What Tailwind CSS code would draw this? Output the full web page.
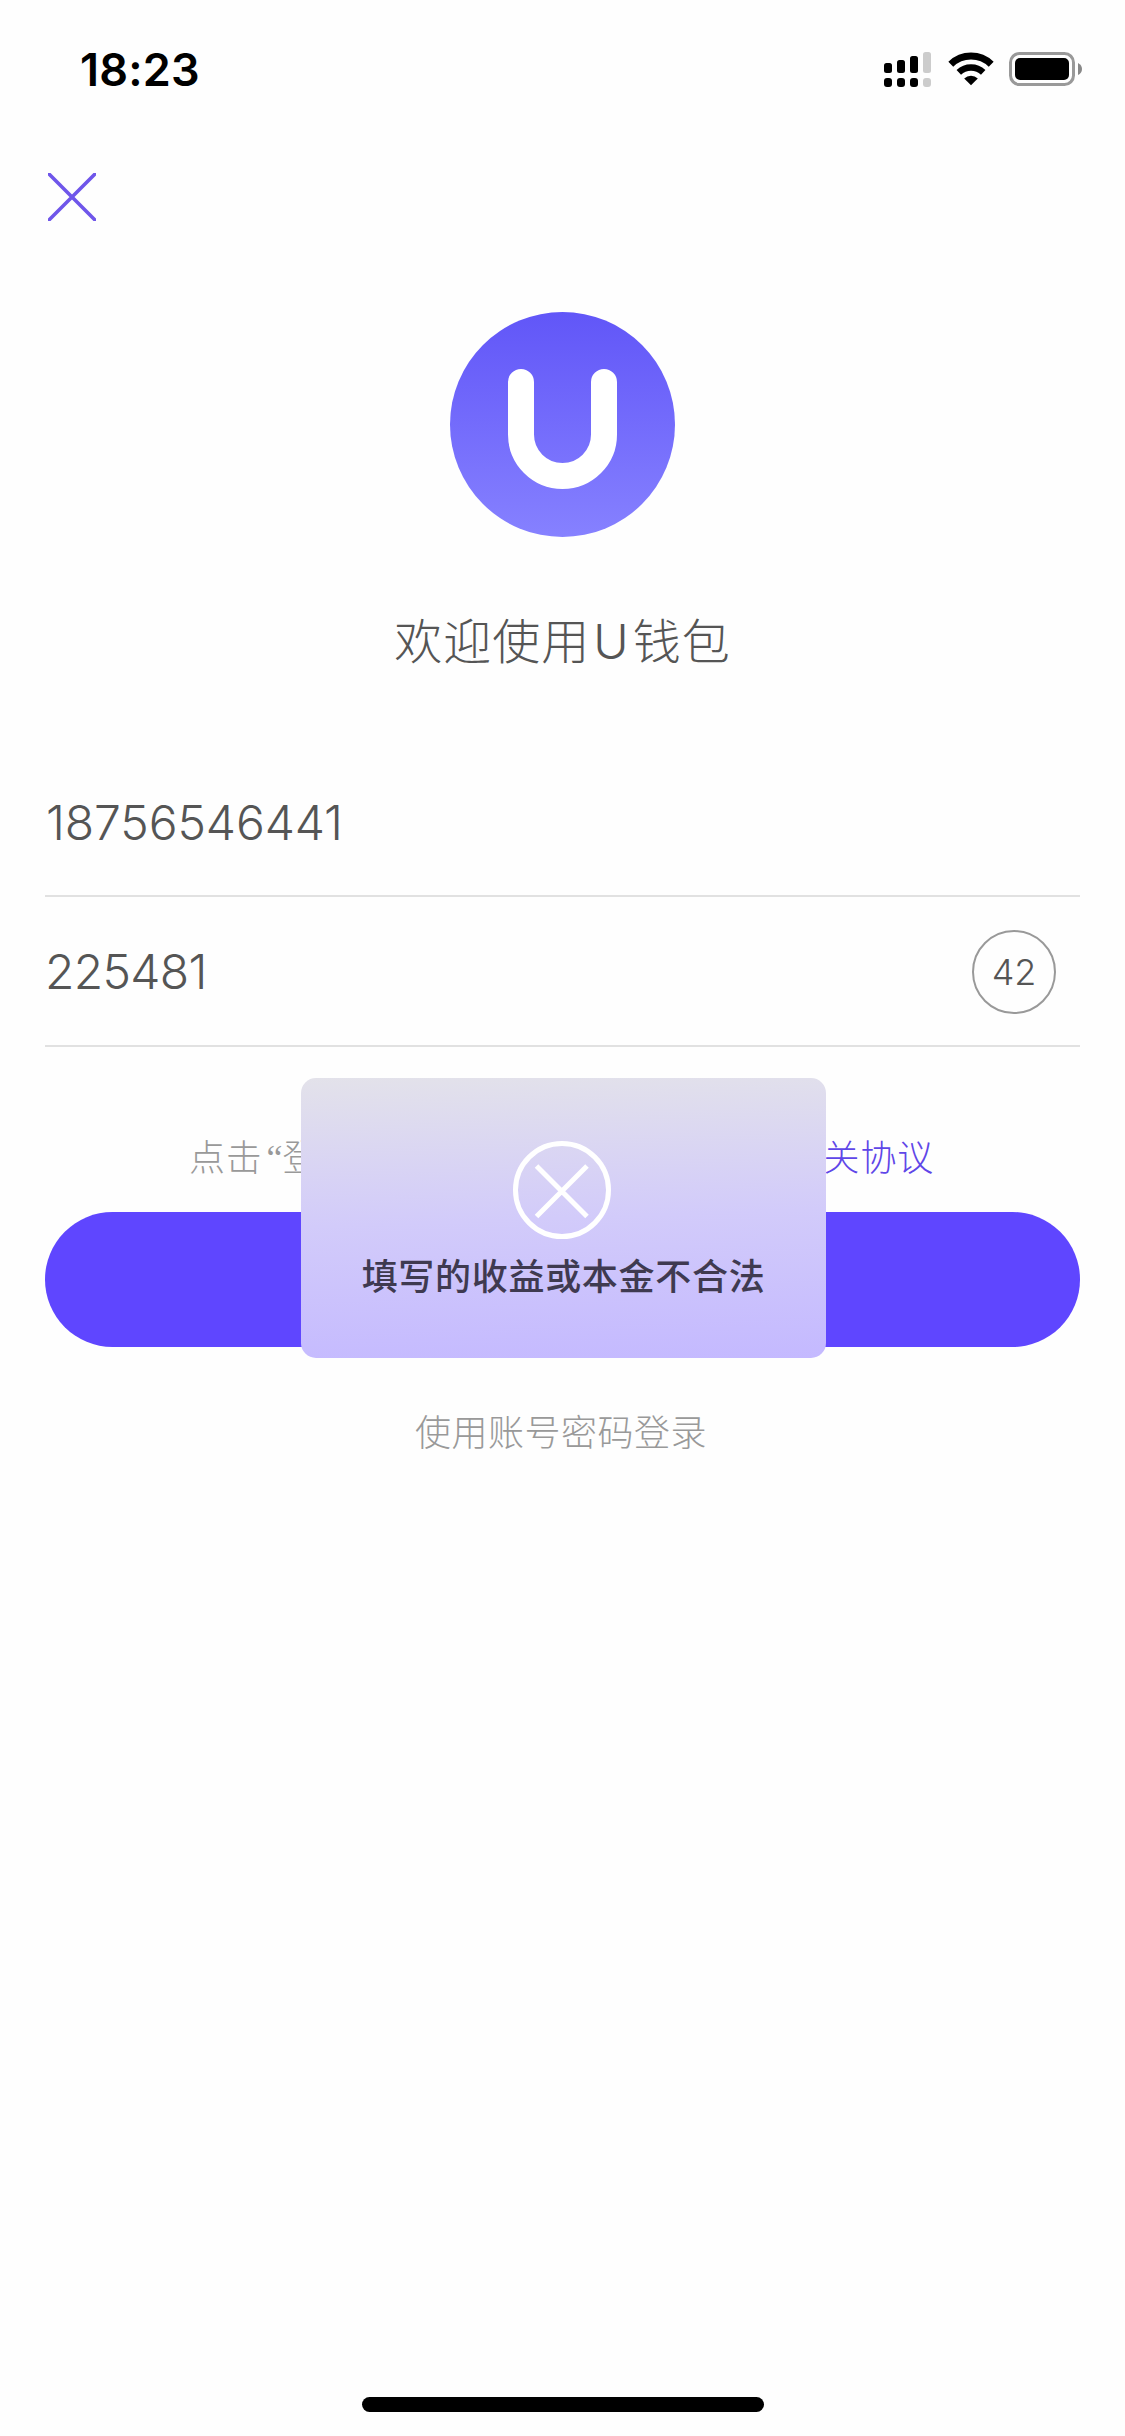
<!DOCTYPE html>
<html lang="zh-CN">
<head>
<meta charset="utf-8">
<meta name="viewport" content="width=device-width, initial-scale=1">
<title>U钱包</title>
<script src="https://cdn.jsdelivr.net/npm/@tailwindcss/browser@4"></script>
</head>
<body class="bg-white">
<div class="relative flex h-[2436px] w-[1125px] flex-col overflow-hidden bg-[#fefefe] font-['Inter','Noto_Sans_CJK_SC',sans-serif] font-light text-[#555]">
  <!-- Status bar -->
  <header class="flex h-[132px] items-center justify-between pt-1.5 pr-[42px] pl-[80px]">
    <time class="text-[45px] leading-none font-semibold tracking-[0.2px] text-black">18:23</time>
    <div class="flex h-9 items-start pt-px">
      <svg class="h-9 w-[48px]" viewBox="0 0 48 36">
        <g fill="#000">
          <rect x="0" y="11" width="8" height="10" rx="2.5"/><rect x="13" y="8" width="8" height="13" rx="2.5"/><rect x="26" y="4" width="8" height="17" rx="2.5"/>
          <rect x="0" y="26" width="8" height="9" rx="3"/><rect x="13" y="26" width="8" height="9" rx="3"/><rect x="26" y="26" width="8" height="9" rx="3"/>
        </g>
        <g fill="#ccc"><rect x="39" y="0" width="8" height="21" rx="2.5"/><rect x="39" y="26" width="8" height="9" rx="3"/></g>
      </svg>
      <svg class="ml-4 h-9 w-[46px]" viewBox="0 0 46 36">
        <path d="M2.8 12.2A29 29 0 0 1 43.2 12.2" fill="none" stroke="#000" stroke-width="7"/>
        <path d="M10.8 20.4A17.5 17.5 0 0 1 35.2 20.4" fill="none" stroke="#000" stroke-width="6.4"/>
        <path d="M23 33.2L16.2 26.4A10 10 0 0 1 29.8 26.4Z" fill="#000"/>
      </svg>
      <svg class="ml-[15px] h-9 w-[74px]" viewBox="0 0 74 36">
        <rect x="1.5" y="1.5" width="63" height="31" rx="9" fill="none" stroke="#999" stroke-width="3"/>
        <rect x="6" y="6" width="54" height="22" rx="5"/>
        <path d="M69 11Q73 13 73 17T69 23Z" fill="#888"/>
      </svg>
    </div>
  </header>

  <main class="flex flex-col px-[45px] pt-[41px]">
    <button class="ml-[3px] size-12" aria-label="关闭">
      <svg class="size-12" viewBox="0 0 48 48"><path d="M0 0L48 48M48 0L0 48" stroke="#6f56ea" stroke-width="3.6"/></svg>
    </button>

    <div class="mt-[91px] flex flex-col items-center">
      <svg class="size-[225px]" viewBox="0 0 225 225">
        <defs><linearGradient id="logo" x1="0" y1="0" x2="0" y2="1"><stop offset="0" stop-color="#6156f8"/><stop offset="1" stop-color="#8681ff"/></linearGradient></defs>
        <circle cx="112.5" cy="112.5" r="112.5" fill="url(#logo)"/>
        <path d="M71 70V122.500A41.500 41.500 0 0 0 154 122.500V70" fill="none" stroke="#fff" stroke-width="26" stroke-linecap="round"/>
      </svg>
      <h1 class="mt-[69px] flex h-[72px] items-center text-[48px] leading-[72px] tracking-[1px] text-[#555]">欢迎使用<span class="mr-[3px] mb-px ml-[3px]">U</span>钱包</h1>
    </div>

    <div class="mt-[69px] flex h-[150px] items-center border-b-2 border-[#e1e1e1] pt-[3px] pl-px text-[48px] tracking-[-0.1px]">18756546441</div>
    <div class="flex h-[150px] items-center justify-between border-b-2 border-[#e1e1e1] pt-0.5 pr-6 text-[48px]">
      <span class="tracking-[-0.7px]">225481</span>
      <span class="flex size-[84px] items-center justify-center rounded-full border-2 border-[#999] text-[36px]">42</span>
    </div>

    <p class="mt-[84px] flex h-[54px] items-center justify-between pr-[146px] pl-[144px] text-[36px] leading-[54px] tracking-[0.8px]">
      <span class="flex text-[#999]">点击<span class="mr-[1px] ml-[4px] w-[15px] font-['Liberation_Serif',serif]">“</span>登</span>
      <span class="text-[#5f46e8]">关协议</span>
    </p>
    <button class="mt-[27px] h-[135px] rounded-full bg-[#5f46ff]" aria-label="登录"></button>
    <p class="mt-[59px] pr-[3px] text-center text-[36px] leading-[54px] tracking-[0.5px] text-[#999]">使用账号密码登录</p>
  </main>

  <!-- Error toast -->
  <div class="absolute top-[1078px] left-[301px] flex h-[280px] w-[525px] flex-col items-center rounded-[15px] bg-linear-[178deg] from-[#e3e2ea] via-[#d2cbfa] to-[#c4b9ff] pt-[63px]" role="alert">
    <svg class="mr-[3px] size-[98px]" viewBox="0 0 98 98" fill="none" stroke="#fff" stroke-width="5">
      <circle cx="49" cy="49" r="46.500"/><path d="M23.500 25L74 75.500M74 25L23.500 75.500"/>
    </svg>
    <p class="mt-[11px] text-[36px] leading-[54px] font-medium tracking-[0.7px] text-[#3f3a50]">填写的收益或本金不合法</p>
  </div>

  <!-- Home indicator -->
  <div class="mt-auto mb-6 ml-[362px] h-[15px] w-[402px] rounded-full bg-black"></div>
</div>
</body>
</html>
